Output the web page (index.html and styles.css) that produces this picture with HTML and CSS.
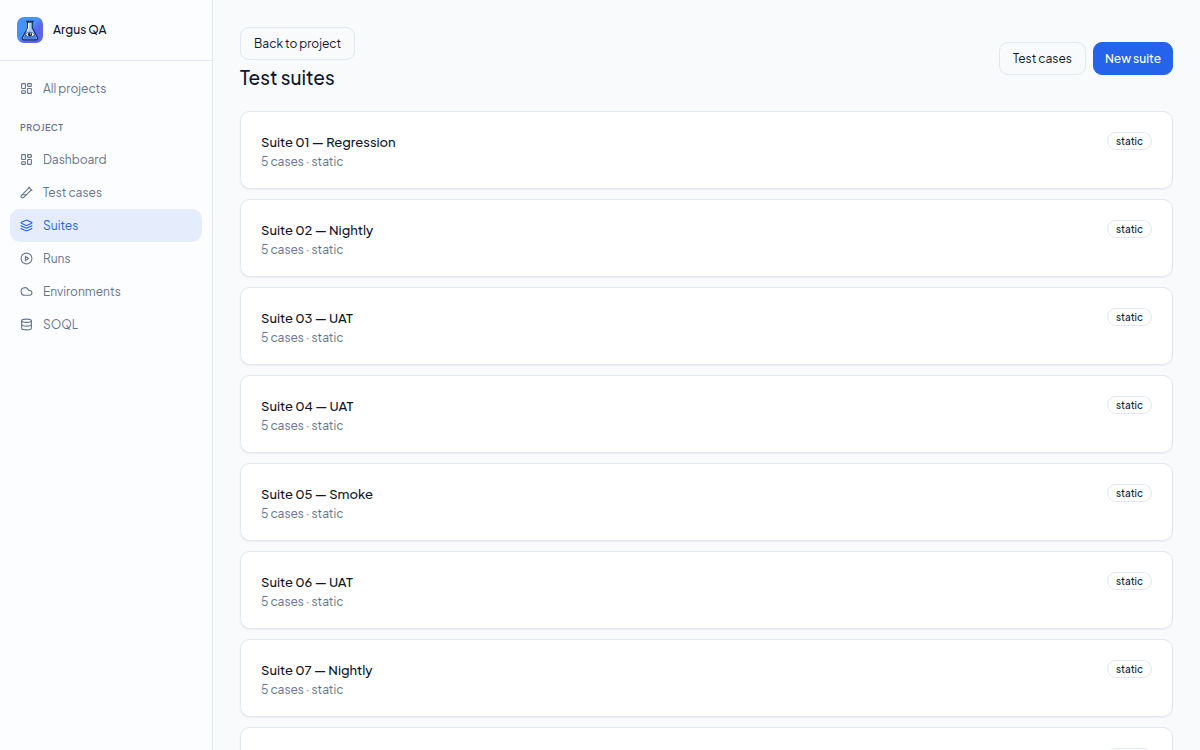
FILE: index.html
```html
<!DOCTYPE html>
<html lang="en">
<head>
<meta charset="utf-8">
<meta name="viewport" content="width=device-width, initial-scale=1">
<title>Test suites – Argus QA</title>
<link rel="stylesheet" href="styles.css">
</head>
<body>
<svg class="sprite" aria-hidden="true">
  <symbol id="i-grid" viewBox="0 0 24 24"><rect x="3" y="3" width="7" height="9" rx="1"/><rect x="14" y="3" width="7" height="5" rx="1"/><rect x="14" y="12" width="7" height="9" rx="1"/><rect x="3" y="16" width="7" height="5" rx="1"/></symbol>
  <symbol id="i-tube" viewBox="0 0 24 24"><path d="M21 7 6.82 21.18a2.83 2.83 0 0 1-3.99-.01a2.83 2.83 0 0 1 0-4L17 3"/><path d="m16 2 6 6"/><path d="M12 16H4"/></symbol>
  <symbol id="i-layers" viewBox="0 0 24 24"><path d="M12.83 2.18a2 2 0 0 0-1.66 0L2.6 6.08a1 1 0 0 0 0 1.83l8.58 3.91a2 2 0 0 0 1.66 0l8.58-3.9a1 1 0 0 0 0-1.83z"/><path d="M2 12a1 1 0 0 0 .58.91l8.6 3.91a2 2 0 0 0 1.65 0l8.58-3.9A1 1 0 0 0 22 12"/><path d="M2 17a1 1 0 0 0 .58.91l8.6 3.91a2 2 0 0 0 1.65 0l8.58-3.9A1 1 0 0 0 22 17"/></symbol>
  <symbol id="i-play" viewBox="0 0 24 24"><circle cx="12" cy="12" r="10"/><path d="m10 8 6 4-6 4z"/></symbol>
  <symbol id="i-cloud" viewBox="0 0 24 24"><path d="M17.5 19H9a7 7 0 1 1 6.71-9h1.79a4.5 4.5 0 1 1 0 9Z"/></symbol>
  <symbol id="i-db" viewBox="0 0 24 24"><ellipse cx="12" cy="5" rx="9" ry="3"/><path d="M3 5v14a9 3 0 0 0 18 0V5"/><path d="M3 12a9 3 0 0 0 18 0"/></symbol>
</svg>
<div class="app">
  <aside class="sidebar">
    <div class="brand">
      <svg class="logo" viewBox="0 0 26 26" aria-hidden="true">
        <defs><linearGradient id="lg" x1="0" y1="0" x2="1" y2="1"><stop offset=".45" stop-color="#4792f6"/><stop offset=".6" stop-color="#5b66ef"/></linearGradient></defs>
        <rect width="26" height="26" rx="7" fill="url(#lg)"/>
        <path d="M10.7 4.8V11L5.6 20.2Q4.6 22.8 7.4 22.8H18.6Q21.4 22.8 20.4 20.2L15.3 11V4.8Z" fill="#a9cdfb" stroke="#172d5c" stroke-width="1.2" stroke-linejoin="round"/>
        <path d="M8.4 16.4H17.6L19.4 20.4Q19.9 21.9 18.4 21.9H7.6Q6.1 21.9 6.6 20.4Z" fill="#4b83ee"/>
        <path d="M9.8 4.6H16.2" stroke="#172d5c" stroke-width="1.5" stroke-linecap="round"/>
        <path d="M11.6 6V11.2L10 14" stroke="#fff" stroke-width="1.2" fill="none"/>
        <path d="M8 17.6Q13 12.6 18 17.6Q13 22.4 8 17.6Z" fill="#fff" stroke="#172d5c" stroke-width=".6"/>
        <circle cx="13" cy="17.5" r="2.1" fill="#10234f"/><circle cx="13.6" cy="16.9" r=".6" fill="#fff"/>
      </svg>
      <span>Argus QA</span>
    </div>
    <nav class="nav">
      <a class="item" href="#"><svg class="icon"><use href="#i-grid"/></svg>All projects</a>
      <h2 class="group">PROJECT</h2>
      <a class="item" href="#"><svg class="icon"><use href="#i-grid"/></svg>Dashboard</a>
      <a class="item" href="#"><svg class="icon"><use href="#i-tube"/></svg>Test cases</a>
      <a class="item active" href="#" aria-current="page"><svg class="icon"><use href="#i-layers"/></svg>Suites</a>
      <a class="item" href="#"><svg class="icon"><use href="#i-play"/></svg>Runs</a>
      <a class="item" href="#"><svg class="icon"><use href="#i-cloud"/></svg>Environments</a>
      <a class="item" href="#"><svg class="icon"><use href="#i-db"/></svg>SOQL</a>
    </nav>
  </aside>
  <main class="main">
    <header class="head">
      <div>
        <button class="btn" type="button">Back to project</button>
        <h1 class="title">Test suites</h1>
      </div>
      <div class="actions">
        <button class="btn" type="button">Test cases</button>
        <button class="btn primary" type="button">New suite</button>
      </div>
    </header>
    <div class="list">
      <article class="card"><div><h3 class="name">Suite 01 — Regression</h3><p class="meta">5 cases · static</p></div><span class="badge">static</span></article>
      <article class="card"><div><h3 class="name">Suite 02 — Nightly</h3><p class="meta">5 cases · static</p></div><span class="badge">static</span></article>
      <article class="card"><div><h3 class="name">Suite 03 — UAT</h3><p class="meta">5 cases · static</p></div><span class="badge">static</span></article>
      <article class="card"><div><h3 class="name">Suite 04 — UAT</h3><p class="meta">5 cases · static</p></div><span class="badge">static</span></article>
      <article class="card"><div><h3 class="name">Suite 05 — Smoke</h3><p class="meta">5 cases · static</p></div><span class="badge">static</span></article>
      <article class="card"><div><h3 class="name">Suite 06 — UAT</h3><p class="meta">5 cases · static</p></div><span class="badge">static</span></article>
      <article class="card"><div><h3 class="name">Suite 07 — Nightly</h3><p class="meta">5 cases · static</p></div><span class="badge">static</span></article>
      <article class="card"><div><h3 class="name">Suite 08 — Smoke</h3><p class="meta">5 cases · static</p></div><span class="badge">static</span></article>
    </div>
  </main>
</div>
</body>
</html>
```
FILE: styles.css
```css
* { box-sizing: border-box; }
body {
  margin: 0;
  background: #f8fafc;
  color: #0f172a;
  font-family: "Plus Jakarta Sans", Inter, "Liberation Sans", sans-serif;
  font-size: 12px;
  line-height: 18px;
}
h1, h2, h3, p { margin: 0; }
.sprite { display: none; }
.app { display: flex; height: 100vh; }
.sidebar {
  flex: none;
  width: 213px;
  background: #fcfdff;
  border-right: 1px solid #e2e8f0;
}
.brand {
  display: flex;
  align-items: center;
  gap: 10px;
  padding: 17px;
  border-bottom: 1px solid #e2e8f0;
  font-weight: 500;
  line-height: 20px;
}
.logo { width: 26px; height: 26px; }
.nav { padding: 11px 10px; }
.item {
  display: flex;
  align-items: center;
  gap: 10px;
  height: 33px;
  padding: 0 10px;
  border-radius: 10px;
  color: #64748b;
  text-decoration: none;
}
.active { background: #e5ecfc; color: #2563eb; }
.icon {
  width: 13px;
  height: 13px;
  fill: none;
  stroke: currentColor;
  stroke-width: 2;
  stroke-linecap: round;
  stroke-linejoin: round;
}
.group {
  padding: 14px 10px 6px;
  color: #64748b;
  font-size: 9px;
  font-weight: 600;
  letter-spacing: 0.05em;
}
.main { flex: 1; min-width: 0; overflow: hidden; padding: 27px 27px 0; }
.head {
  display: flex;
  align-items: center;
  justify-content: space-between;
  margin-bottom: 21px;
}
.title { margin-top: 4px; font-size: 19px; font-weight: 500; line-height: 26px; }
.actions { display: flex; gap: 7px; }
.btn {
  height: 33px;
  padding: 1px 13px 0;
  border: 1px solid #e2e8f0;
  border-radius: 9px;
  background: #f8fafc;
  color: #0f172a;
  font: inherit;
}
.primary { border-color: #2563eb; background: #2563eb; color: #fff; font-weight: 500; padding: 1px 11px 0; }
.list { display: flex; flex-direction: column; gap: 10px; }
.card {
  display: flex;
  align-items: flex-start;
  justify-content: space-between;
  padding: 20px 20px 16px;
  border: 1px solid #e2e8f0;
  border-radius: 10px;
  background: #fff;
  box-shadow: 0 1px 2px rgba(15, 23, 42, 0.06);
}
.name { font-size: 13px; font-weight: 500; line-height: 20px; }
.meta { color: #64748b; line-height: 20px; }
.badge {
  padding: 0 8px;
  border: 1px solid #e2e8f0;
  border-radius: 9px;
  font-size: 10px;
  font-weight: 500;
  line-height: 16px;
}
```
